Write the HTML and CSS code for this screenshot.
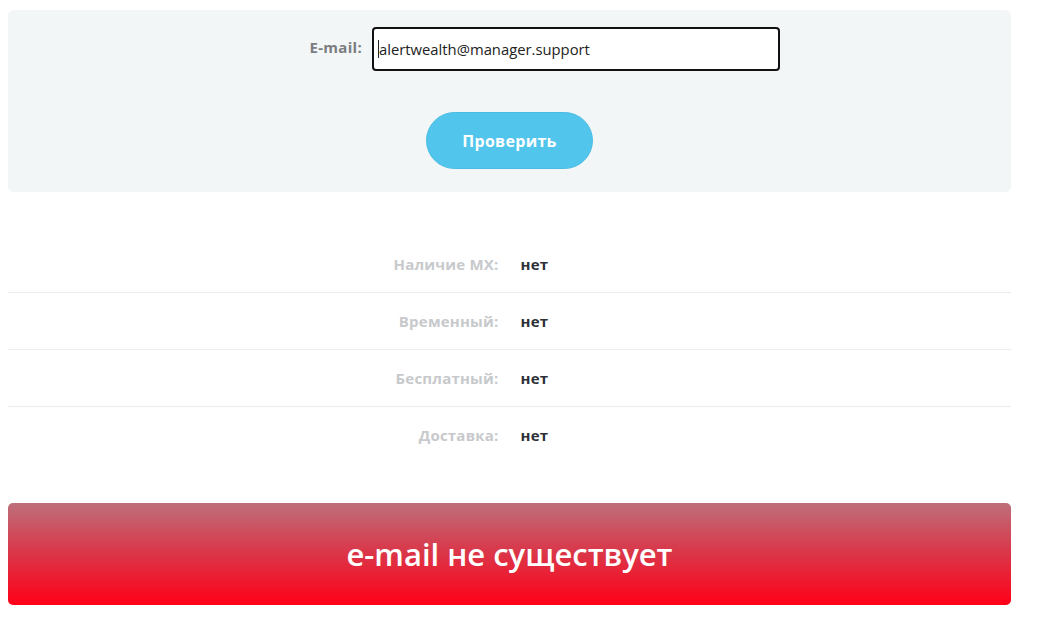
FILE: index.html
```html
<!DOCTYPE html>
<html lang="ru">
<head>
<meta charset="utf-8">
<link rel="stylesheet" href="styles.css">
</head>
<body>
<div class="page">
  <div class="panel">
    <div class="field-row">
      <label class="field-label">E-mail:</label>
      <div class="input"><span class="caret"></span>alertwealth@manager.support</div>
    </div>
    <div class="btn-row">
      <button class="btn">Проверить</button>
    </div>
  </div>
  <div class="results">
    <div class="res-row"><div class="res-label">Наличие MX:</div><div class="res-value">нет</div></div>
    <div class="res-row"><div class="res-label">Временный:</div><div class="res-value">нет</div></div>
    <div class="res-row"><div class="res-label">Бесплатный:</div><div class="res-value">нет</div></div>
    <div class="res-row last"><div class="res-label">Доставка:</div><div class="res-value">нет</div></div>
  </div>
  <div class="status">e-mail не существует</div>
</div>
</body>
</html>
```
FILE: styles.css
```css
html, body { margin: 0; padding: 0; background: #fff; }
body { padding: 10px 0 0 8px; font-family: "Open Sans", "Noto Sans", sans-serif; }
.page { width: 1003px; }
.panel {
  background: #f3f6f7;
  border-radius: 6px;
  padding: 17px 0 23px 0;
}
.field-row { display: flex; align-items: center; padding-left: 254px; }
.field-label {
  width: 100px; text-align: right; margin-right: 10px;
  font-weight: 700; font-size: 15px; color: #7b7d80; letter-spacing: 0.3px;
  position: relative; top: -2px;
}
.input {
  width: 400px; height: 40px; border: 2px solid #111; border-radius: 4px;
  background: #fff; display: flex; align-items: center; padding-left: 4px;
  font-size: 14.8px; color: #222; box-sizing: content-box;
  font-family: "Open Sans", sans-serif; position: relative;
}
.caret { display: inline-block; width: 1px; height: 18px; background: #222; }
.btn-row { display: flex; justify-content: center; margin-top: 41px; }
.btn {
  width: 167px; height: 57px; border-radius: 29px; border: 1px solid #4bbde4;
  background: #52c5ec; color: #fff; font-weight: 700; font-size: 16px;
  font-family: "Open Sans", sans-serif; letter-spacing: 0.3px;
}
.results { margin-top: 44px; }
.res-row {
  display: grid; grid-template-columns: 1fr 1fr; column-gap: 22px;
  height: 56px; align-items: center; border-bottom: 1px solid #ececec;
  font-size: 15px; font-weight: 700; letter-spacing: 0.2px;
}
.res-row.last { border-bottom: none; }
.res-label { text-align: right; color: #c7c9cc; }
.res-value { color: #2d3038; }
.status {
  margin-top: 40px; height: 102px; border-radius: 5px;
  background: linear-gradient(to bottom, #be6f7b 0%, #d83a4c 45%, #ff0018 100%);
  color: #fff; display: flex; align-items: center; justify-content: center;
  font-size: 31px; font-weight: 600;
}
```
